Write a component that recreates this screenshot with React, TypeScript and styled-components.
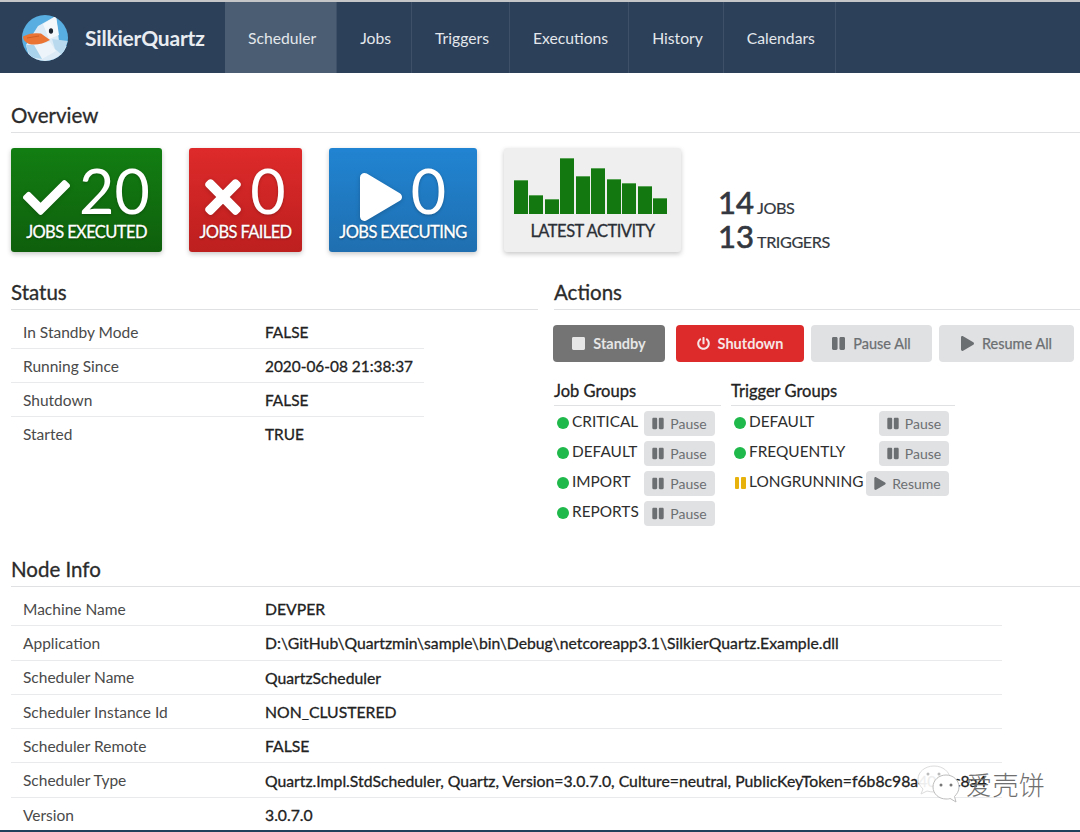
import styled, { createGlobalStyle } from "styled-components";
import { FaCheck, FaTimes, FaPlay, FaPause, FaStop, FaPowerOff } from "react-icons/fa";

const GlobalStyle = createGlobalStyle`
  html, body {
    margin: 0;
    padding: 0;
    background: #fff;
  }
  body {
    font-family: Lato, "Noto Sans", sans-serif;
    color: #333;
  }
`;

const Page = styled.div`
  position: relative;
  width: 1080px;
  height: 832px;
  overflow: hidden;
  display: flex;
  flex-direction: column;
  border-top: 2px solid #c4c6c8;
  border-bottom: 2px solid #22405c;
  box-sizing: border-box;
`;

// Top bar
const NavBar = styled.header`
  flex: none;
  height: 71px;
  display: flex;
  background: #2c405a;
`;

const Brand = styled.div`
  width: 225px;
  display: flex;
  align-items: center;
  padding-left: 22px;
  box-sizing: border-box;
  gap: 17px;
`;

const BrandName = styled.span`
  font-size: 21px;
  font-weight: 700;
  color: #e9edf1;
  letter-spacing: -0.2px;
`;

const NavItem = styled.div<{ $active?: boolean }>`
  display: flex;
  align-items: center;
  padding: 0 20px 0 23px;
  font-size: 15.7px;
  color: #e4e8ec;
  border-right: 1px solid #3d5068;
  background: ${(p) => (p.$active ? "#4a5d72" : "transparent")};
`;

const Main = styled.main`
  flex: 1;
  padding-left: 11px;
  min-height: 0;
`;

const SectionTitle = styled.h2<{ $top: number }>`
  margin: ${(p) => p.$top}px 0 0;
  height: 28px;
  line-height: 23px;
  font-size: 20.5px;
  font-weight: 400;
  -webkit-text-stroke: 0.3px #2b2b2b;
  color: #2b2b2b;
  border-bottom: 1px solid #dfe1e3;
`;

// Overview
const StatRow = styled.div`
  display: flex;
  margin-top: 15px;
  height: 104px;
`;

const StatCard = styled.div<{ $from: string; $to: string; $width: number; $gap: number }>`
  width: ${(p) => p.$width}px;
  margin-right: ${(p) => p.$gap}px;
  height: 104px;
  border-radius: 3px;
  background: linear-gradient(${(p) => p.$from}, ${(p) => p.$to});
  box-shadow: 0 2px 5px rgba(0, 0, 0, 0.22);
  color: #fff;
  display: flex;
  flex-direction: column;
  align-items: center;
`;

const StatTop = styled.div`
  margin-top: 13px;
  height: 60px;
  display: flex;
  align-items: center;
  justify-content: center;
  gap: 9px;
`;

const StatIcon = styled.span<{ $w: number; $h: number }>`
  display: flex;
  margin-top: 12px;
  filter: drop-shadow(0 1px 2px rgba(0, 0, 0, 0.2));
  svg {
    width: ${(p) => p.$w}px;
    height: ${(p) => p.$h}px;
  }
`;

const StatNumber = styled.span`
  font-size: 61px;
  font-weight: 400;
  line-height: 60px;
  text-shadow: 0 1px 3px rgba(0, 0, 0, 0.25);
`;

const StatLabel = styled.span`
  margin-top: 1px;
  font-size: 16.5px;
  line-height: 20px;
  letter-spacing: -0.6px;
  white-space: nowrap;
  -webkit-text-stroke: 0.3px #fff;
  text-shadow: 0 1px 2px rgba(0, 0, 0, 0.45);
`;

const ActivityCard = styled.div`
  width: 177px;
  height: 104px;
  margin-right: 37px;
  border-radius: 3px;
  background: #efefef;
  box-shadow: 0 2px 5px rgba(0, 0, 0, 0.22);
  display: flex;
  flex-direction: column;
  align-items: center;
`;

const Bars = styled.div`
  height: 66px;
  margin-right: 4px;
  display: flex;
  align-items: flex-end;
  gap: 1.4px;
`;

const Bar = styled.div<{ $h: number }>`
  width: 14.1px;
  height: ${(p) => p.$h}px;
  background: #12780f;
  box-shadow: inset 0 1px 0 #58a356;
`;

const ActivityLabel = styled.span`
  margin-top: 7px;
  font-size: 16.5px;
  line-height: 20px;
  letter-spacing: -0.5px;
  color: #2b2f36;
  -webkit-text-stroke: 0.3px #2b2f36;
`;

const Totals = styled.div`
  margin-top: 37px;
  display: flex;
  flex-direction: column;
`;

const TotalLine = styled.div`
  display: flex;
  align-items: baseline;
  gap: 3px;
  height: 34px;
  line-height: 34px;
`;

const TotalNumber = styled.span`
  font-size: 31px;
  font-weight: 400;
  color: #333840;
  -webkit-text-stroke: 0.7px #333840;
`;

const TotalLabel = styled.span`
  font-size: 16.2px;
  letter-spacing: -0.4px;
  color: #333840;
  -webkit-text-stroke: 0.2px #333840;
`;

// Status + Actions
const Columns = styled.div`
  display: flex;
  gap: 16px;
`;

const StatusColumn = styled.section`
  width: 527px;
  flex: none;
`;

const ActionsColumn = styled.section`
  flex: 1;
`;

const InfoTable = styled.div<{ $width: number }>`
  width: ${(p) => p.$width}px;
  margin-top: 5px;
`;

const InfoRow = styled.div<{ $h: number }>`
  display: flex;
  align-items: center;
  height: ${(p) => p.$h}px;
  box-sizing: border-box;
  padding-left: 12px;
  font-size: 15.5px;
  white-space: nowrap;
  border-bottom: 1px solid #e9eaeb;
  &:last-child {
    border-bottom: none;
  }
`;

const InfoLabel = styled.span`
  width: 242px;
  flex: none;
  color: #4a4a4a;
`;

const InfoValue = styled.span<{ $size: number }>`
  font-size: ${(p) => p.$size}px;
  color: #222;
  -webkit-text-stroke: 0.3px #222;
`;

const ButtonBar = styled.div`
  display: flex;
  margin: 15px 0 0 -1px;
`;

const ActionButton = styled.div<{ $bg: string; $fg: string; $width: number; $gap: number; $bold?: boolean }>`
  width: ${(p) => p.$width}px;
  margin-right: ${(p) => p.$gap}px;
  height: 37px;
  border-radius: 4px;
  background: ${(p) => p.$bg};
  color: ${(p) => p.$fg};
  display: flex;
  align-items: center;
  justify-content: center;
  gap: 8px;
  font-size: 14.5px;
  font-weight: ${(p) => (p.$bold ? 700 : 400)};
  -webkit-text-stroke: ${(p) => (p.$bold ? "0" : "0.25px")};
  svg {
    width: 13px;
    height: 15px;
  }
`;

const GroupsRow = styled.div`
  display: flex;
  margin-top: 17px;
  gap: 10px;
`;

const Group = styled.div<{ $width: number }>`
  width: ${(p) => p.$width}px;
`;

const GroupTitle = styled.h3`
  margin: 0 0 5px;
  height: 26px;
  line-height: 24px;
  font-size: 16.5px;
  font-weight: 400;
  color: #222;
  -webkit-text-stroke: 0.3px #222;
  border-bottom: 1px solid #dfe1e3;
`;

const GroupRow = styled.div`
  display: flex;
  justify-content: space-between;
  height: 30px;
  padding: 0 6px 0 3px;
`;

const GroupName = styled.div`
  display: flex;
  align-items: center;
  height: 20px;
  gap: 3px;
  font-size: 15.4px;
  color: #2e2e2e;
`;

const Dot = styled.span`
  width: 12px;
  height: 12px;
  margin-top: 4px;
  border-radius: 50%;
  background: #1fb84a;
`;

const PausedMark = styled.span`
  width: 12px;
  height: 12px;
  margin-top: 4px;
  display: flex;
  justify-content: center;
  gap: 2px;
  &::before,
  &::after {
    content: "";
    width: 4.5px;
    background: #e8b20c;
    border-radius: 1px;
  }
`;

const SmallButton = styled.div<{ $width: number }>`
  width: ${(p) => p.$width}px;
  height: 25px;
  border-radius: 4px;
  background: #e0e1e3;
  color: #6c6f72;
  font-size: 14px;
  display: flex;
  align-items: center;
  justify-content: center;
  gap: 6px;
  svg {
    width: 12px;
    height: 13px;
  }
`;

// Watermark sits over the table
const Watermark = styled.div`
  position: absolute;
  left: 917px;
  top: 762px;
  display: flex;
  align-items: center;
  pointer-events: none;
`;

const WatermarkText = styled.span`
  margin: -2px 0 0 -1px;
  font-family: "Noto Sans CJK SC", sans-serif;
  font-size: 26px;
  font-weight: 300;
  letter-spacing: 0.4px;
  color: #6f6f6f;
`;

const DuckLogo = () => (
  <svg width="46" height="46" viewBox="0 0 46 46">
    <defs>
      <clipPath id="logo-clip">
        <circle cx="23" cy="23" r="23" />
      </clipPath>
    </defs>
    <g clipPath="url(#logo-clip)">
      <rect width="46" height="46" fill="#58aee0" />
      <polygon points="16,11 34,1 37,26 46,32 40,46 8,46 4,30" fill="#dcebf6" />
      <polygon points="21,9 34,1 37,20 27,24" fill="#f4f8fb" />
      <polygon points="12,30 28,27 34,36 20,44" fill="#eef5fa" />
      <polygon points="30,24 46,26 40,40 33,34" fill="#b9d9ee" />
      <polygon points="4,30 12,30 20,44 8,42" fill="#a9d3ec" />
    </g>
    <path d="M1 21.5 Q9 17 19 18.5 L28 25 Q17 31 7 29 Q1 26 1 21.5Z" fill="#ea7434" />
    <path d="M5 23 L17 21" stroke="#c9581f" strokeWidth="0.8" />
    <ellipse cx="29" cy="16" rx="2.1" ry="2.8" fill="#1d2530" />
  </svg>
);

const WeChatIcon = () => (
  <svg width="50" height="40" viewBox="0 0 50 40">
    <path d="M17 2C8 2 1 8 1 15c0 4 2 7 5 10l-2 5 6-3c2 .6 5 1 7 1 9 0 16-6 16-13S26 2 17 2Z" fill="#ffffff" fillOpacity="0.92" stroke="#dcdcdc" />
    <path d="M29 11c-7 0-13 5-13 12s6 12 13 12c2 0 3 0 4-.6l6 3.6-1.5-5.5C40 30 42 27 42 23c0-7-6-12-13-12Z" fill="#ffffff" stroke="#bdbdbd" />
    <circle cx="24" cy="21" r="1.5" fill="#777" />
    <circle cx="34" cy="21" r="1.5" fill="#777" />
    <circle cx="11" cy="10" r="1.5" fill="#bbb" />
    <circle cx="22" cy="10" r="1.5" fill="#bbb" />
  </svg>
);

const activity = [34, 19, 15, 56, 38, 46, 35, 31, 28, 16];

const statusRows = [
  ["In Standby Mode", "FALSE"],
  ["Running Since", "2020-06-08 21:38:37"],
  ["Shutdown", "FALSE"],
  ["Started", "TRUE"],
];

const nodeRows = [
  ["Machine Name", "DEVPER"],
  ["Application", "D:\\GitHub\\Quartzmin\\sample\\bin\\Debug\\netcoreapp3.1\\SilkierQuartz.Example.dll"],
  ["Scheduler Name", "QuartzScheduler"],
  ["Scheduler Instance Id", "NON_CLUSTERED"],
  ["Scheduler Remote", "FALSE"],
  ["Scheduler Type", "Quartz.Impl.StdScheduler, Quartz, Version=3.0.7.0, Culture=neutral, PublicKeyToken=f6b8c98a402cc8a4"],
  ["Version", "3.0.7.0"],
];

const navItems = ["Jobs", "Triggers", "Executions", "History", "Calendars"];

function App() {
  return (
    <Page>
      <GlobalStyle />
      <NavBar>
        <Brand>
          <DuckLogo />
          <BrandName>SilkierQuartz</BrandName>
        </Brand>
        <NavItem $active>Scheduler</NavItem>
        {navItems.map((item) => (
          <NavItem key={item}>{item}</NavItem>
        ))}
      </NavBar>

      <Main>
        <SectionTitle $top={31}>Overview</SectionTitle>
        <StatRow>
          <StatCard $from="#127e12" $to="#0f5f0c" $width={151} $gap={27}>
            <StatTop>
              <StatIcon $w={47} $h={47}>
                <FaCheck />
              </StatIcon>
              <StatNumber>20</StatNumber>
            </StatTop>
            <StatLabel>JOBS EXECUTED</StatLabel>
          </StatCard>
          <StatCard $from="#de2a2a" $to="#bd1f1f" $width={113} $gap={27}>
            <StatTop>
              <StatIcon $w={36} $h={52}>
                <FaTimes />
              </StatIcon>
              <StatNumber>0</StatNumber>
            </StatTop>
            <StatLabel>JOBS FAILED</StatLabel>
          </StatCard>
          <StatCard $from="#2184d2" $to="#1f6fb0" $width={148} $gap={27}>
            <StatTop>
              <StatIcon $w={42} $h={48}>
                <FaPlay />
              </StatIcon>
              <StatNumber>0</StatNumber>
            </StatTop>
            <StatLabel>JOBS EXECUTING</StatLabel>
          </StatCard>
          <ActivityCard>
            <Bars>
              {activity.map((h, i) => (
                <Bar key={i} $h={h} />
              ))}
            </Bars>
            <ActivityLabel>LATEST ACTIVITY</ActivityLabel>
          </ActivityCard>
          <Totals>
            <TotalLine>
              <TotalNumber>14</TotalNumber>
              <TotalLabel>JOBS</TotalLabel>
            </TotalLine>
            <TotalLine>
              <TotalNumber>13</TotalNumber>
              <TotalLabel>TRIGGERS</TotalLabel>
            </TotalLine>
          </Totals>
        </StatRow>

        <Columns>
          <StatusColumn>
            <SectionTitle $top={29}>Status</SectionTitle>
            <InfoTable $width={413}>
              {statusRows.map(([label, value]) => (
                <InfoRow key={label} $h={34}>
                  <InfoLabel>{label}</InfoLabel>
                  <InfoValue $size={15.4}>{value}</InfoValue>
                </InfoRow>
              ))}
            </InfoTable>
          </StatusColumn>

          <ActionsColumn>
            <SectionTitle $top={29}>Actions</SectionTitle>
            <ButtonBar>
              <ActionButton $bg="#747474" $fg="#e6e6e6" $width={112} $gap={11} $bold>
                <FaStop />
                Standby
              </ActionButton>
              <ActionButton $bg="#dd2a2a" $fg="#f6e6e6" $width={128} $gap={7} $bold>
                <FaPowerOff />
                Shutdown
              </ActionButton>
              <ActionButton $bg="#e0e1e3" $fg="#6c6f72" $width={121} $gap={7}>
                <FaPause />
                Pause All
              </ActionButton>
              <ActionButton $bg="#e0e1e3" $fg="#6c6f72" $width={135} $gap={0}>
                <FaPlay />
                Resume All
              </ActionButton>
            </ButtonBar>

            <GroupsRow>
              <Group $width={167}>
                <GroupTitle>Job Groups</GroupTitle>
                {["CRITICAL", "DEFAULT", "IMPORT", "REPORTS"].map((name) => (
                  <GroupRow key={name}>
                    <GroupName>
                      <Dot />
                      {name}
                    </GroupName>
                    <SmallButton $width={71}>
                      <FaPause />
                      Pause
                    </SmallButton>
                  </GroupRow>
                ))}
              </Group>
              <Group $width={224}>
                <GroupTitle>Trigger Groups</GroupTitle>
                <GroupRow>
                  <GroupName>
                    <Dot />
                    DEFAULT
                  </GroupName>
                  <SmallButton $width={70}>
                    <FaPause />
                    Pause
                  </SmallButton>
                </GroupRow>
                <GroupRow>
                  <GroupName>
                    <Dot />
                    FREQUENTLY
                  </GroupName>
                  <SmallButton $width={70}>
                    <FaPause />
                    Pause
                  </SmallButton>
                </GroupRow>
                <GroupRow>
                  <GroupName>
                    <PausedMark />
                    LONGRUNNING
                  </GroupName>
                  <SmallButton $width={83}>
                    <FaPlay />
                    Resume
                  </SmallButton>
                </GroupRow>
              </Group>
            </GroupsRow>
          </ActionsColumn>
        </Columns>

        <SectionTitle $top={27}>Node Info</SectionTitle>
        <InfoTable $width={991}>
          {nodeRows.map(([label, value]) => (
            <InfoRow key={label} $h={34.3}>
              <InfoLabel>{label}</InfoLabel>
              <InfoValue $size={15.75}>{value}</InfoValue>
            </InfoRow>
          ))}
        </InfoTable>
      </Main>

      <Watermark>
        <WeChatIcon />
        <WatermarkText>爱壳饼</WatermarkText>
      </Watermark>
    </Page>
  );
}

export default App;
